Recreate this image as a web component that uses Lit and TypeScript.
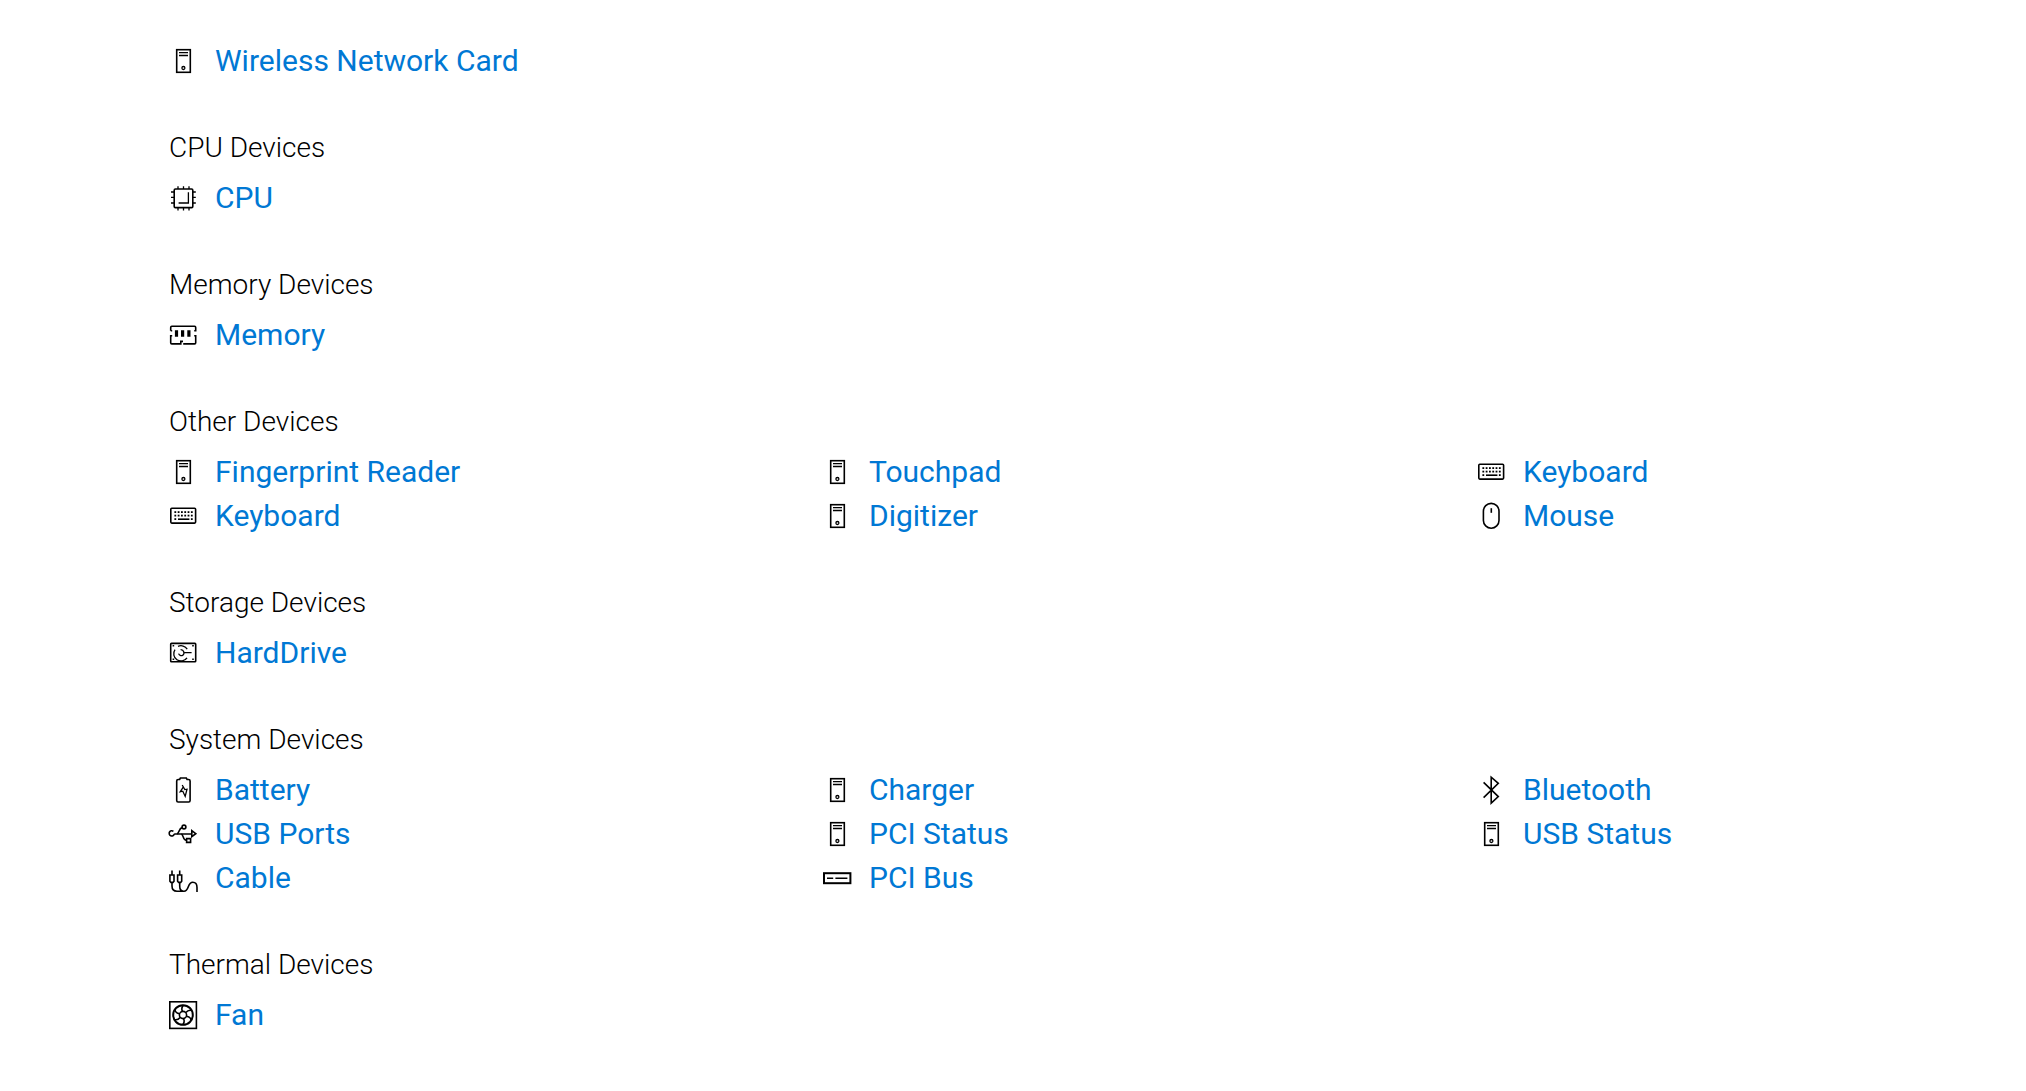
import { LitElement, html, svg, css, type SVGTemplateResult } from "lit";
import { customElement, property } from "lit/decorators.js";

const keyDots = [10, 13.5, 17].map((y, row) =>
  (row < 2 ? [5.4, 8.7, 12, 15.3, 18.6, 21.9] : [5.4, 21.9]).map(
    (x) => svg`<rect class="solid" x=${x} y=${y - 0.8} width="1.8" height="1.8"/>`
  )
);

const spokes = [20, 80, 140, 200, 260, 320].map(
  (a) => svg`<path d="M17.8 14 Q21.5 13.2 23.6 16.2" transform="rotate(${a} 14 14)"/>`
);

const icons: Record<string, SVGTemplateResult> = {
  device: svg`<rect x="7.7" y="2.7" width="13.6" height="22.6"/>
    <path class="thin" d="M10 5.7H19M10 8.5H19"/><circle class="thin" cx="14.4" cy="21" r="1.5"/>`,
  cpu: svg`<rect x="5.2" y="5" width="18.6" height="18.6" rx="1.2"/>
    <path class="thin" d="M9 2.2V5M14.5 2.2V5M20 2.2V5M9 23.6V26.6M14.5 23.6V26.6M20 23.6V26.6M2 8H5M2 13.4H5M2 19H5M24 8H26.8M24 13.4H26.8M24 19H26.8M19.4 8.2V19H9.6"/>`,
  memory: svg`<path d="M1.7 9.8V6.4Q1.7 5.3 2.8 5.3H25.6Q26.7 5.3 26.7 6.4V9.8H25.2M1.7 9.8H3.2M3.2 14.8H1.7V21.8Q1.7 22.9 2.8 22.9H11.8V20.4H14M14.2 22.9H25.6Q26.7 22.9 26.7 21.8V14.8H25.2"/>
    <path class="solid" d="M5.9 9.2H9.1V15.8H5.9ZM12 9.2H15.2V15.8H12ZM18.3 9.2H21.5V15.8H18.3Z"/>`,
  keyboard: svg`<rect x="1.8" y="6.3" width="24.8" height="14.8" rx="1"/>${keyDots}
    <path d="M9 17.2H20.4"/>`,
  mouse: svg`<rect x="6.4" y="1.4" width="15.6" height="24.8" rx="7.8"/><path d="M14.3 6.2V10.8"/>`,
  drive: svg`<rect x="1.7" y="4.4" width="25" height="18.4" rx=".8"/>
    <path class="solid" d="M3.6 6H5.2V7.6H3.6ZM23.2 6H24.8V7.6H23.2ZM3.6 19.4H5.2V21H3.6ZM23.2 19.4H24.8V21H23.2Z"/>
    <path class="thin" d="M9 7.4A7.2 7.2 0 0 1 18.2 10.2M6 10.6A7.2 7.2 0 0 0 18 18.8M11.6 10.6A3.2 3.2 0 0 1 13.6 16.4A3 3 0 0 1 9.6 14.6M15.6 13.6H22.6"/>`,
  battery: svg`<path d="M9.2 3.5H10.6L11.4 2H17.3L18.1 3.5H19.6Q21.1 3.5 21.1 5V24.6Q21.1 26 19.7 26H9.1Q7.7 26 7.7 24.6V5Q7.7 3.5 9.2 3.5Z"/>
    <path class="thin" d="M13.2 9L15.8 13.6L18 13.2L16.2 20.4L13.8 15.2L11.2 15.8L14.4 10.8"/>`,
  bluetooth: svg`<path d="M6.6 6.4L21.3 20.6L14.2 27.2V1.2L21.3 7.4L6.6 21.6"/>`,
  usb: svg`<path d="M5.3 14A2.6 2.6 0 1 1 4.4 11.3M5.2 14H22.8M22.8 10.7V16.7L26.8 13.7Z"/>
    <path d="M8 13.8C10.2 13.4 9.8 8.4 13 7.6M12.4 14C14.8 15 13.6 20.2 17.4 20.4M17.6 18.6H21.6V22.4H17.6Z"/><circle cx="15" cy="7" r="1.9"/>`,
  cable: svg`<path d="M.9 11H5V17.2L4 18.4H1.9L.9 17.2ZM8.6 11H12.7V17.2L11.7 18.4H9.6L8.6 17.2ZM3 6.4V11M10.7 6.4V11"/>
    <path d="M3 18.4V22C3 25.4 4.8 27.2 8 27.2H15C20.4 27.2 18.2 18.2 23.8 18.2C27 18.2 28 20.6 28 23.4V28M10.7 18.4V22C10.7 25.4 12 27.2 14.6 27.2"/>`,
  pci: svg`<rect class="bold" x="1" y="9.2" width="26.4" height="10"/><path d="M4 14.2H10.2M12.4 14.2H24.4"/>`,
  fan: svg`<rect x=".8" y=".8" width="26.6" height="26.6"/><circle class="bold" cx="14" cy="14" r="9.8"/>
    <circle cx="14" cy="14" r="3.6"/>${spokes}`,
};

interface Device { name: string; icon: string }
interface Group { title?: string; devices: Device[] }

const d = (name: string, icon = "device"): Device => ({ name, icon });

const groups: Group[] = [
  { devices: [d("Wireless Network Card")] },
  { title: "CPU Devices", devices: [d("CPU", "cpu")] },
  { title: "Memory Devices", devices: [d("Memory", "memory")] },
  {
    title: "Other Devices",
    devices: [
      d("Fingerprint Reader"), d("Touchpad"), d("Keyboard", "keyboard"),
      d("Keyboard", "keyboard"), d("Digitizer"), d("Mouse", "mouse"),
    ],
  },
  { title: "Storage Devices", devices: [d("HardDrive", "drive")] },
  {
    title: "System Devices",
    devices: [
      d("Battery", "battery"), d("Charger"), d("Bluetooth", "bluetooth"),
      d("USB Ports", "usb"), d("PCI Status"), d("USB Status"),
      d("Cable", "cable"), d("PCI Bus", "pci"),
    ],
  },
  { title: "Thermal Devices", devices: [d("Fan", "fan")] },
];

@customElement("device-icon")
export class DeviceIcon extends LitElement {
  @property() name = "device";

  static styles = css`
    :host { display: block; flex: none; }
    .icon {
      display: block; width: 28px; height: 28px; overflow: visible;
      fill: none; stroke: #000; stroke-width: 1.6;
    }
    .thin { stroke-width: 1.3; }
    .bold { stroke-width: 2; }
    .solid { fill: #000; stroke: none; }
  `;

  render() {
    return html`<svg class="icon" viewBox="0 0 28 28" aria-hidden="true">${icons[this.name]}</svg>`;
  }
}

@customElement("app-root")
export class AppRoot extends LitElement {
  static styles = css`
    :host {
      display: block;
      background: #fff;
      color: #000;
      font-family: Roboto, "Liberation Sans", sans-serif;
    }
    .page {
      display: flex;
      flex-direction: column;
      gap: 47px;
      padding: 39px 64px 48px 169px;
    }
    .title {
      margin: 0;
      padding-bottom: 10px;
      font-size: 28px;
      font-weight: 360;
      line-height: 36px;
    }
    .list {
      display: grid;
      grid-template-columns: repeat(3, minmax(0, 1fr));
      column-gap: 169px;
      margin: 0;
      padding: 0;
      list-style: none;
    }
    .item { display: flex; align-items: center; gap: 18px; height: 44px; }
    .link {
      color: #0078d4;
      font-size: 30px;
      font-weight: 380;
      line-height: 44px;
      text-decoration: none;
      white-space: nowrap;
    }
    .link:hover { text-decoration: underline; }
  `;

  render() {
    return html`<main class="page">
      ${groups.map(
        (g) => html`<section>
          ${g.title ? html`<h2 class="title">${g.title}</h2>` : null}
          <ul class="list">
            ${g.devices.map(
              (v) => html`<li class="item">
                <device-icon name=${v.icon}></device-icon>
                <a class="link" href="#">${v.name}</a>
              </li>`
            )}
          </ul>
        </section>`
      )}
    </main>`;
  }
}
